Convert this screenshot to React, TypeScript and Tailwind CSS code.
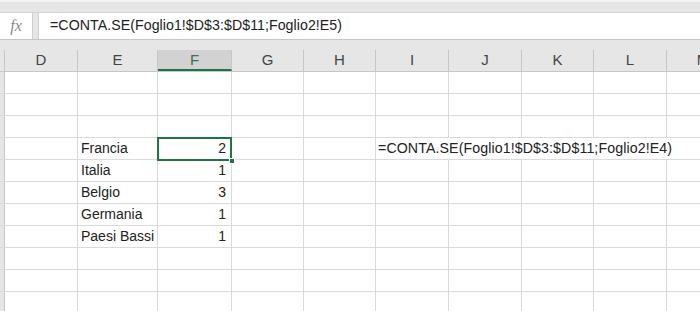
import React from "react";

const cols = [
  { l: "D", w: "w-[73px]" },
  { l: "E", w: "w-[80px]" },
  { l: "F", w: "w-[74px]" },
  { l: "G", w: "w-[72px]" },
  { l: "H", w: "w-[72px]" },
  { l: "I", w: "w-[73px]" },
  { l: "J", w: "w-[73px]" },
  { l: "K", w: "w-[72px]" },
  { l: "L", w: "w-[73px]" },
  { l: "M", w: "w-[73px]" },
];

const data: Record<number, [string, string]> = {
  3: ["Francia", "2"],
  4: ["Italia", "1"],
  5: ["Belgio", "3"],
  6: ["Germania", "1"],
  7: ["Paesi Bassi", "1"],
};

const font = { fontFamily: '"Liberation Sans", Arial, sans-serif' };

export default function App() {
  const rows = Array.from({ length: 11 }, (_, i) => i);
  return (
    <div className="w-[700px] h-[311px] overflow-hidden bg-white relative" style={font}>
      {/* top strip */}
      <div className="h-[13px] bg-[#e6e6e6] border-t-2 border-t-[#f3f3f3] border-b border-b-[#d4d4d4]" />
      {/* formula bar */}
      <div className="flex h-[27px] bg-[#e6e6e6] border-b border-[#c6c6c6]">
        <div className="w-[33px] bg-white border-r border-[#d0d0d0] flex items-center justify-center">
          <span className="text-[#8a8a8a] italic text-[16px]" style={{ fontFamily: '"Liberation Serif", serif' }}>fx</span>
        </div>
        <div className="w-[5px]" />
        <div className="flex-1 bg-white border-l border-[#d0d0d0] flex items-center pl-[11px] text-[14.2px] text-[#222] tracking-[0.05px] whitespace-nowrap">
          =CONTA.SE(Foglio1!$D$3:$D$11;Foglio2!E5)
        </div>
      </div>
      <div className="h-[10px] bg-[#e6e6e6]" />
      {/* header row */}
      <div className="flex h-[22px] bg-[#e6e6e6] border-b border-[#c6c6c6]">
        <div className="w-[5px] shrink-0 border-r border-[#c6c6c6]" />
        {cols.map((c) => (
          <div
            key={c.l}
            className={`${c.w} shrink-0 flex items-center justify-center text-[15px] ${
              c.l === "F"
                ? "bg-[#d2d2d2] text-[#3e6d50] border-b-2 border-[#217346] border-r border-r-[#c6c6c6]"
                : "text-[#444] border-r border-[#c6c6c6]"
            }`}
          >
            <span className={c.l === "F" ? "mt-[1px]" : ""}>{c.l}</span>
          </div>
        ))}
      </div>
      {/* grid rows */}
      {rows.map((r) => (
        <div key={r} className="flex h-[22px] border-b border-[#dadada]">
          <div className="w-[5px] shrink-0 bg-[#e6e6e6] border-r border-[#c6c6c6]" />
          {cols.map((c) => {
            let content: React.ReactNode = null;
            let cls = "border-r border-[#dadada]";
            if (data[r] && c.l === "E") {
              content = data[r][0];
              cls += " justify-start pl-[3px]";
            } else if (data[r] && c.l === "F") {
              content = data[r][1];
              cls += " justify-end pr-[5px]";
            } else if (r === 3 && c.l === "I") {
              content = (
                <span className="whitespace-nowrap relative z-10 text-[14.2px] tracking-[0.1px]">=CONTA.SE(Foglio1!$D$3:$D$11;Foglio2!E4)</span>
              );
              cls = "justify-start pl-[2px] overflow-visible border-r border-transparent";
            } else if (r === 3 && (c.l === "J" || c.l === "K" || c.l === "L")) {
              cls = "border-r border-transparent";
            }
            return (
              <div
                key={c.l}
                className={`${c.w} shrink-0 flex items-center text-[14px] text-[#222] ${cls}`}
              >
                {content}
              </div>
            );
          })}
        </div>
      ))}
      {/* selection */}
      <div className="absolute left-[157px] top-[137px] w-[75px] h-[24px] border-2 border-[#217346]" />
      <div className="absolute left-[229px] top-[158px] w-[6px] h-[6px] bg-[#217346] border border-white" />
    </div>
  );
}
